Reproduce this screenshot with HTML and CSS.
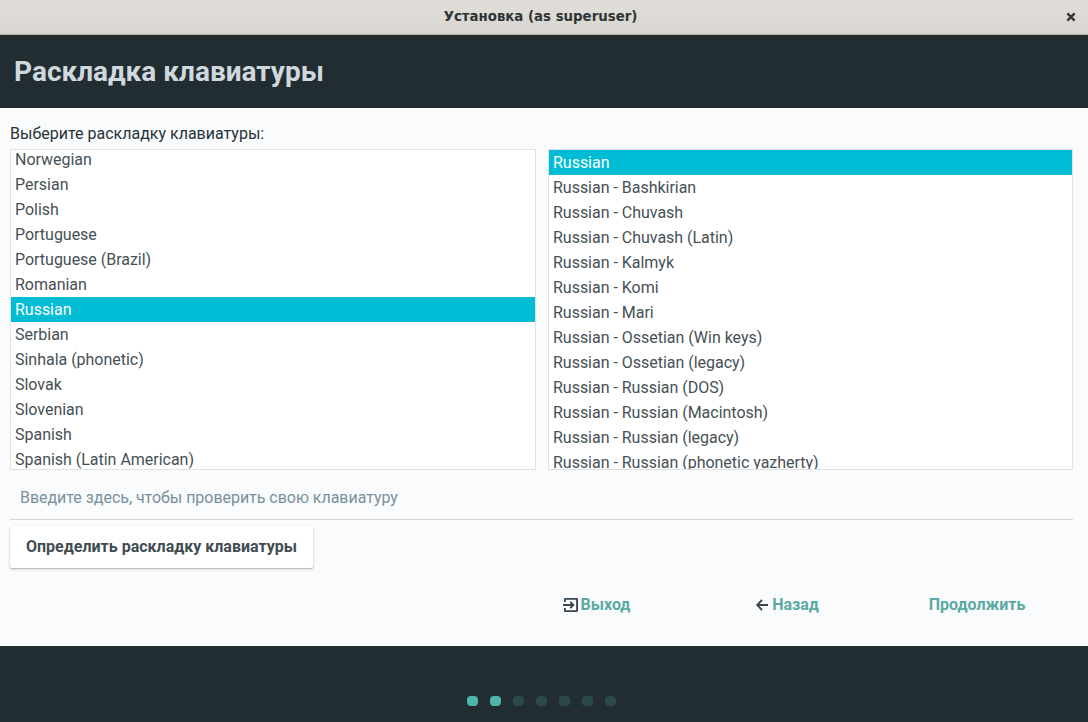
FILE: index.html
```html
<!DOCTYPE html>
<html lang="ru">
<head>
<meta charset="utf-8">
<title>Установка</title>
<link rel="stylesheet" href="styles.css">
</head>
<body>
<div class="window">
  <div class="titlebar">
    <span class="titlebar-text">Установка (as superuser)</span>
    <svg class="close" width="10" height="10" viewBox="0 0 10 10"><path d="M1.4 1.4 8.6 8.6M8.6 1.4 1.4 8.6"/></svg>
  </div>
  <header class="header"><h1 class="heading">Раскладка клавиатуры</h1></header>
  <main class="content">
    <p class="prompt">Выберите раскладку клавиатуры:</p>
    <div class="lists">
      <ul class="list list-scrolled">
        <li>Norwegian</li>
        <li>Persian</li>
        <li>Polish</li>
        <li>Portuguese</li>
        <li>Portuguese (Brazil)</li>
        <li>Romanian</li>
        <li class="selected">Russian</li>
        <li>Serbian</li>
        <li>Sinhala (phonetic)</li>
        <li>Slovak</li>
        <li>Slovenian</li>
        <li>Spanish</li>
        <li>Spanish (Latin American)</li>
      </ul>
      <ul class="list">
        <li class="selected">Russian</li>
        <li>Russian - Bashkirian</li>
        <li>Russian - Chuvash</li>
        <li>Russian - Chuvash (Latin)</li>
        <li>Russian - Kalmyk</li>
        <li>Russian - Komi</li>
        <li>Russian - Mari</li>
        <li>Russian - Ossetian (Win keys)</li>
        <li>Russian - Ossetian (legacy)</li>
        <li>Russian - Russian (DOS)</li>
        <li>Russian - Russian (Macintosh)</li>
        <li>Russian - Russian (legacy)</li>
        <li>Russian - Russian (phonetic yazherty)</li>
      </ul>
    </div>
    <div class="entry">Введите здесь, чтобы проверить свою клавиатуру</div>
    <button class="detect">Определить раскладку клавиатуры</button>
    <nav class="actions">
      <a class="action action-exit">
        <svg class="icon" width="16" height="16" viewBox="0 0 16 16"><path d="M1.9 5V2.4Q1.9 1.9 2.4 1.9H13.6Q14.1 1.9 14.1 2.4V13.6Q14.1 14.1 13.6 14.1H2.4Q1.9 14.1 1.9 13.6V11M0 8H10M7.2 4.8 10.4 8 7.2 11.2"/></svg>
        <span>Выход</span>
      </a>
      <a class="action action-back">
        <svg class="icon" width="12" height="12" viewBox="0 0 12 12"><path d="M12 6H1.5M6 .8 1.2 6 6 11.2"/></svg>
        <span>Назад</span>
      </a>
      <a class="action"><span>Продолжить</span></a>
    </nav>
  </main>
  <footer class="footer">
    <i class="dot done"></i><i class="dot done"></i><i class="dot"></i><i class="dot"></i><i class="dot"></i><i class="dot"></i><i class="dot"></i>
  </footer>
</div>
</body>
</html>
```

FILE: styles.css
```css
* { box-sizing: border-box; }
body { margin: 0; font: 16px/25px Roboto, sans-serif; color: #465055; }
.window { width: 1088px; height: 722px; display: flex; flex-direction: column; overflow: hidden; background: #222d32; }
.titlebar { height: 35px; flex: none; display: grid; grid-template-columns: 1fr auto 1fr; align-items: center; padding: 0 12px 1px 5px; background: linear-gradient(#e1deda, #d9d5d0); border-bottom: 1px solid #b8b0a6; }
.titlebar-text { grid-column: 2; font: bold 13.33px/20px "DejaVu Sans", sans-serif; color: #2e3436; }
.close { justify-self: end; fill: none; stroke: #2e3436; stroke-width: 2.3; }
.header { height: 73px; flex: none; padding: 17px 14px 15px; background: #222d32; }
.heading { margin: 0; font-size: 28px; line-height: 40px; font-weight: 700; color: #cfd8dc; }
.content { height: 538px; flex: none; padding: 13px 15px 0 10px; background: #fafbfd; }
.prompt { margin: 0 0 3px; color: #263238; }
.lists { display: grid; grid-template-columns: 526px 525px; gap: 12px; height: 321px; }
.list { list-style: none; margin: 0; padding: 0; height: 321px; border: 1px solid #dfe1e3; background: #fff; overflow: hidden; }
.list li { height: 25px; padding-left: 4px; white-space: nowrap; letter-spacing: -.02px; }
.list-scrolled li:first-child { margin-top: -3px; }
.list .selected { background: #00bcd4; color: #fff; }
.entry { height: 50px; padding: 15px 10px 0; border-bottom: 1px solid #d3d6d8; color: #78909c; letter-spacing: -.035px; }
.detect { display: block; width: 303px; height: 42px; margin-top: 6px; padding: 0; border: 0; border-radius: 2px; background: #fff; box-shadow: 0 1px 3px rgba(0,0,0,.2), 0 1px 1px rgba(0,0,0,.14); font: 700 16px/42px Roboto, sans-serif; color: #414c51; }
.actions { display: grid; grid-template-columns: repeat(3, 190px); margin: 24px 0 0 492px; font-weight: 700; color: #59aaa2; }
.action { display: flex; align-items: center; justify-content: center; gap: 3px; }
.action-exit { gap: 2px; padding-right: 1px; }
.action-back { gap: 4px; padding-left: 1px; }
.icon { fill: none; stroke: #37474f; stroke-width: 1.9; }
.footer { flex: 1; display: flex; justify-content: center; gap: 12px; padding: 50px 5px 0 0; }
.dot { width: 11px; height: 10px; border-radius: 4px; background: #2b484b; }
.dot.done { background: #4db6ac; }
```
